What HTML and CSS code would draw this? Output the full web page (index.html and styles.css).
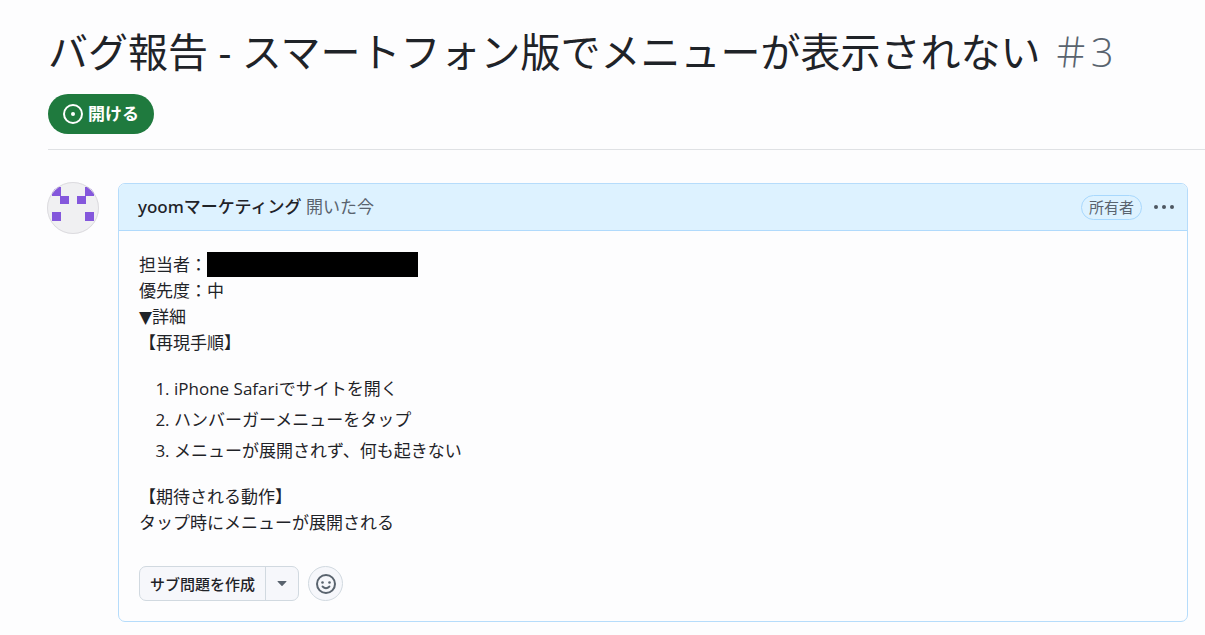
FILE: index.html
```html
<!DOCTYPE html>
<html lang="ja">
<head>
    <meta charset="UTF-8">
    <meta name="viewport" content="width=device-width, initial-scale=1.0">
    <title>バグ報告 - スマートフォン版でメニューが表示されない</title>
    <link rel="stylesheet" href="styles.css">
</head>
<body>
    <header class="issue-header">
        <h1 class="issue-title">バグ報告 - スマートフォン版でメニューが表示されない <span class="issue-number">＃3</span></h1>
        <span class="state">
            <svg class="state-icon" viewBox="0 0 20 20" aria-hidden="true">
                <circle cx="10" cy="10" r="9" fill="none" stroke="currentColor" stroke-width="2"/>
                <circle cx="10" cy="10" r="2" fill="currentColor"/>
            </svg>
            開ける
        </span>
    </header>

    <main class="timeline">
        <a href="#" class="avatar" aria-label="yoomマーケティング">
            <svg viewBox="0 0 52 52" aria-hidden="true">
                <defs>
                    <clipPath id="avatar-clip"><circle cx="26" cy="26" r="26"/></clipPath>
                </defs>
                <g clip-path="url(#avatar-clip)">
                    <rect width="52" height="52" fill="#f0f0f2"/>
                    <path fill="#8457dc" d="M5 5h9v9H5zM38 5h9v9h-9zM13 14h9v8h-9zM30 14h9v8h-9zM5 30h9v9H5zM38 30h9v9h-9z"/>
                </g>
                <circle cx="26" cy="26" r="25.500" fill="none" stroke="#dcdbdf"/>
            </svg>
        </a>

        <article class="comment">
            <div class="comment-header">
                <p class="comment-author"><a href="#" class="author">yoomマーケティング</a> 開いた今</p>
                <span class="label">所有者</span>
                <button type="button" class="menu-button" aria-label="メニュー">
                    <svg viewBox="0 0 22 6" aria-hidden="true">
                        <circle cx="3" cy="3" r="2"/>
                        <circle cx="11" cy="3" r="2"/>
                        <circle cx="19" cy="3" r="2"/>
                    </svg>
                </button>
            </div>

            <div class="comment-body">
                <p>担当者：<span class="redacted"></span><br>
                優先度：中<br>
                <span class="marker">▼</span>詳細<br>
                【再現手順】</p>
                <ol>
                    <li>iPhone Safariでサイトを開く</li>
                    <li>ハンバーガーメニューをタップ</li>
                    <li>メニューが展開されず、何も起きない</li>
                </ol>
                <p>【期待される動作】<br>
                タップ時にメニューが展開される</p>
            </div>

            <div class="comment-actions">
                <div class="button-group">
                    <button type="button" class="sub-issue">サブ問題を作成</button>
                    <button type="button" class="dropdown" aria-label="その他">
                        <svg viewBox="0 0 10 5" aria-hidden="true"><path d="M1 0h8q1 0 .3.700L5.500 4.700q-.5.400-1 0L.7.700Q0 0 1 0z"/></svg>
                    </button>
                </div>
                <button type="button" class="reaction" aria-label="リアクション">
                    <svg viewBox="0 0 20 20" aria-hidden="true">
                        <circle cx="10" cy="10" r="9" fill="none" stroke="currentColor" stroke-width="2"/>
                        <circle cx="6.500" cy="8.500" r="1.300" fill="currentColor"/>
                        <circle cx="13.500" cy="8.500" r="1.300" fill="currentColor"/>
                        <path d="M6.500 12.500Q10 16 13.500 12.500" fill="none" stroke="currentColor" stroke-width="1.800" stroke-linecap="round"/>
                    </svg>
                </button>
            </div>
        </article>
    </main>
</body>
</html>
```
FILE: styles.css
```css
* {
    box-sizing: border-box;
}

body {
    margin: 0;
    background-color: #fdfdfe;
    color: #1f2328;
    font-family: "Open Sans", "Noto Sans CJK JP", sans-serif;
    font-size: 17px;
    line-height: 26px;
}

h1, p, ol {
    margin: 0;
}

a {
    color: inherit;
    text-decoration: none;
}

button {
    margin: 0;
    padding: 0;
    font-family: inherit;
    color: inherit;
    cursor: pointer;
}

svg {
    display: block;
}

/* header */
.issue-header {
    margin-left: 48px;
    padding: 26px 0 15px;
    border-bottom: 1px solid #dfe1e4;
}

.issue-title {
    margin-bottom: 16px;
    font-size: 40px;
    font-weight: 400;
    line-height: 52px;
}

.issue-number {
    color: #59636e;
    font-weight: 300;
}

.state {
    display: inline-flex;
    align-items: center;
    gap: 5px;
    height: 40px;
    padding: 0 15px;
    border-radius: 20px;
    background-color: #1f7a3e;
    color: #fff;
    font-weight: 700;
    vertical-align: top;
}

.state-icon {
    width: 20px;
    height: 20px;
}

/* comment */
.timeline {
    display: flex;
    align-items: flex-start;
    gap: 19px;
    padding: 32px 17px 13px 47px;
}

.avatar {
    flex: none;
    width: 52px;
}

.comment {
    flex: 1;
    margin-top: 1px;
    border: 1px solid #b6dcfb;
    border-radius: 7px;
}

.comment-header {
    display: flex;
    align-items: center;
    height: 47px;
    padding: 0 12px 0 19px;
    border-bottom: 1px solid #b0dafc;
    border-radius: 6px 6px 0 0;
    background-color: #ddf2ff;
    color: #59636e;
}

.comment-author {
    flex: 1;
}

.author {
    color: #1f2328;
    font-family: "Noto Sans", "Noto Sans CJK JP", sans-serif;
    font-weight: 500;
}

.label {
    padding: 0 7px;
    border: 1px solid #a8d8fd;
    border-radius: 13px;
    font-size: 15px;
    line-height: 23px;
}

.menu-button {
    margin-left: 11px;
    border: none;
    background: none;
    color: #4d5761;
}

.menu-button svg {
    width: 22px;
    height: 6px;
    fill: currentColor;
}

.comment-body {
    padding: 21px 20px 0;
}

.comment-body ol {
    margin: 20px 0;
    padding-left: 35px;
}

.comment-body li + li {
    margin-top: 5px;
}

.redacted {
    display: inline-block;
    width: 211px;
    height: 25px;
    background-color: #000;
    vertical-align: top;
}

.marker {
    font-family: "DejaVu Sans", sans-serif;
}

.comment-actions {
    display: flex;
    align-items: center;
    gap: 9px;
    padding: 30px 20px 20px;
}

.button-group {
    display: flex;
    height: 35px;
    border: 1px solid #d1d9e0;
    border-radius: 7px;
    background-color: #f6f7fb;
}

.sub-issue {
    padding: 0 10px;
    border: none;
    background: none;
    font-size: 15px;
    font-weight: 500;
}

.dropdown {
    display: flex;
    align-items: center;
    justify-content: center;
    width: 33px;
    border: none;
    border-left: 1px solid #d1d9e0;
    background: none;
    color: #59636e;
}

.dropdown svg {
    width: 10px;
    height: 5px;
    fill: currentColor;
}

.reaction {
    display: flex;
    align-items: center;
    justify-content: center;
    width: 35px;
    height: 35px;
    border: 1px solid #d1d9e0;
    border-radius: 50%;
    background-color: #f6f7fb;
    color: #59636e;
}

.reaction svg {
    width: 20px;
    height: 20px;
}
```
